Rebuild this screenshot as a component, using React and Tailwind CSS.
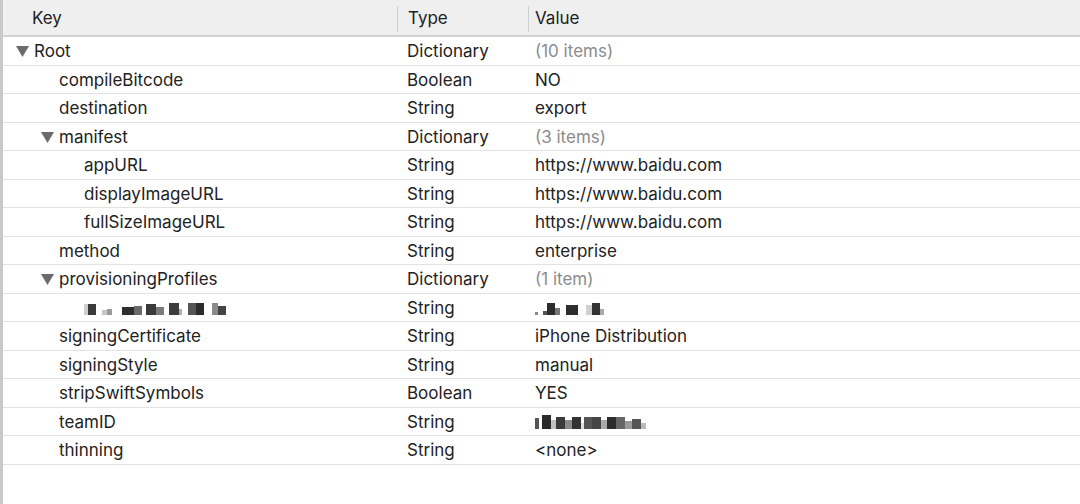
import React from 'react';

const rows = [
  { key: 'Root', level: 0, open: true, type: 'Dictionary', value: '(10 items)', muted: true },
  { key: 'compileBitcode', level: 1, type: 'Boolean', value: 'NO' },
  { key: 'destination', level: 1, type: 'String', value: 'export' },
  { key: 'manifest', level: 1, open: true, type: 'Dictionary', value: '(3 items)', muted: true },
  { key: 'appURL', level: 2, type: 'String', value: 'https://www.baidu.com' },
  { key: 'displayImageURL', level: 2, type: 'String', value: 'https://www.baidu.com' },
  { key: 'fullSizeImageURL', level: 2, type: 'String', value: 'https://www.baidu.com' },
  { key: 'method', level: 1, type: 'String', value: 'enterprise' },
  { key: 'provisioningProfiles', level: 1, open: true, type: 'Dictionary', value: '(1 item)', muted: true },
  { key: null, level: 2, type: 'String', value: null, blurKey: true, blurValue: 'short' },
  { key: 'signingCertificate', level: 1, type: 'String', value: 'iPhone Distribution' },
  { key: 'signingStyle', level: 1, type: 'String', value: 'manual' },
  { key: 'stripSwiftSymbols', level: 1, type: 'Boolean', value: 'YES' },
  { key: 'teamID', level: 1, type: 'String', value: null, blurValue: 'long' },
  { key: 'thinning', level: 1, type: 'String', value: '<none>' },
];

// pixelated blobs standing in for the redacted strings: [colour, width, height]
const keyBlur = [
  ['#cfcfcf', 4, 11], ['#3a3a3a', 8, 11], ['#fff', 6, 2], ['#c4c4c4', 5, 5], ['#9a9a9a', 5, 6], ['#fff', 10, 2],
  ['#2e2e2e', 12, 8], ['#6a6a6a', 8, 9], ['#fff', 4, 2], ['#3a3a3a', 10, 11], ['#7a7a7a', 8, 8],
  ['#fff', 5, 2], ['#3c3c3c', 10, 12], ['#b0b0b0', 3, 6], ['#fff', 6, 2], ['#555', 8, 12], ['#2c2c2c', 8, 12],
  ['#fff', 8, 2], ['#8a8a8a', 6, 12], ['#444', 8, 9],
];
const shortBlur = [
  ['#888', 3, 3], ['#fff', 5, 2], ['#555', 4, 4], ['#2c2c2c', 8, 12], ['#777', 5, 7], ['#fff', 6, 2],
  ['#2e2e2e', 12, 10], ['#fff', 8, 2], ['#d0d0d0', 6, 10], ['#333', 8, 12], ['#aaa', 4, 6],
];
const longBlur = [
  ['#555', 4, 11], ['#fff', 3, 2], ['#2a2a2a', 9, 14], ['#c0c0c0', 5, 9], ['#3a3a3a', 9, 12], ['#8a8a8a', 7, 9],
  ['#333', 9, 12], ['#e0e0e0', 3, 6], ['#555', 8, 12], ['#444', 9, 12], ['#aaa', 6, 9], ['#2c2c2c', 9, 12],
  ['#666', 9, 12], ['#9a9a9a', 7, 8], ['#555', 9, 10], ['#bbb', 5, 6],
];

function Blur({ blocks }) {
  return (
    <div className="flex items-end h-[14px]">
      {blocks.map(([c, w, h], i) => (
        <span key={i} style={{ background: c, width: w, height: h }} className="block" />
      ))}
    </div>
  );
}

function Triangle() {
  return (
    <svg width="13" height="11" viewBox="0 0 13 11" className="mr-[5px] shrink-0">
      <path d="M0 0 H13 L6.5 11 Z" fill="#6b6b6b" />
    </svg>
  );
}

export default function App() {
  return (
    <div
      className="w-[1080px] h-[504px] bg-white text-[#222] text-[17px] border-l-[3px] border-[#c9c9c9] overflow-hidden"
      style={{ fontFamily: 'Inter, "Liberation Sans", sans-serif' }}
    >
      <div className="flex h-[37px] bg-[#efefef] border-b-2 border-[#d2d2d2] items-center pt-[2px]">
        <div className="w-[394px] pl-[29px]">Key</div>
        <div className="w-[131px] h-[26px] border-l border-[#d0d0d0] pl-[10px] flex items-center">Type</div>
        <div className="flex-1 h-[26px] border-l border-[#d0d0d0] pl-[6px] flex items-center">Value</div>
      </div>
      {rows.map((r, i) => (
        <div key={i} className="flex h-[28.5px] items-center border-b border-[#e3e3e3] pt-[2px]">
          <div className="w-[394px] flex items-center" style={{ paddingLeft: 13 + r.level * 25 }}>
            {r.open ? <Triangle /> : <span className="w-[18px] shrink-0" />}
            {r.blurKey ? <Blur blocks={keyBlur} /> : <span>{r.key}</span>}
          </div>
          <div className="w-[131px] pl-[10px]">{r.type}</div>
          <div className="flex-1 pl-[7px]">
            {r.blurValue === 'short' && <Blur blocks={shortBlur} />}
            {r.blurValue === 'long' && <Blur blocks={longBlur} />}
            {r.value && <span className={r.muted ? 'text-[#8c8c8c]' : ''}>{r.value}</span>}
          </div>
        </div>
      ))}
    </div>
  );
}
